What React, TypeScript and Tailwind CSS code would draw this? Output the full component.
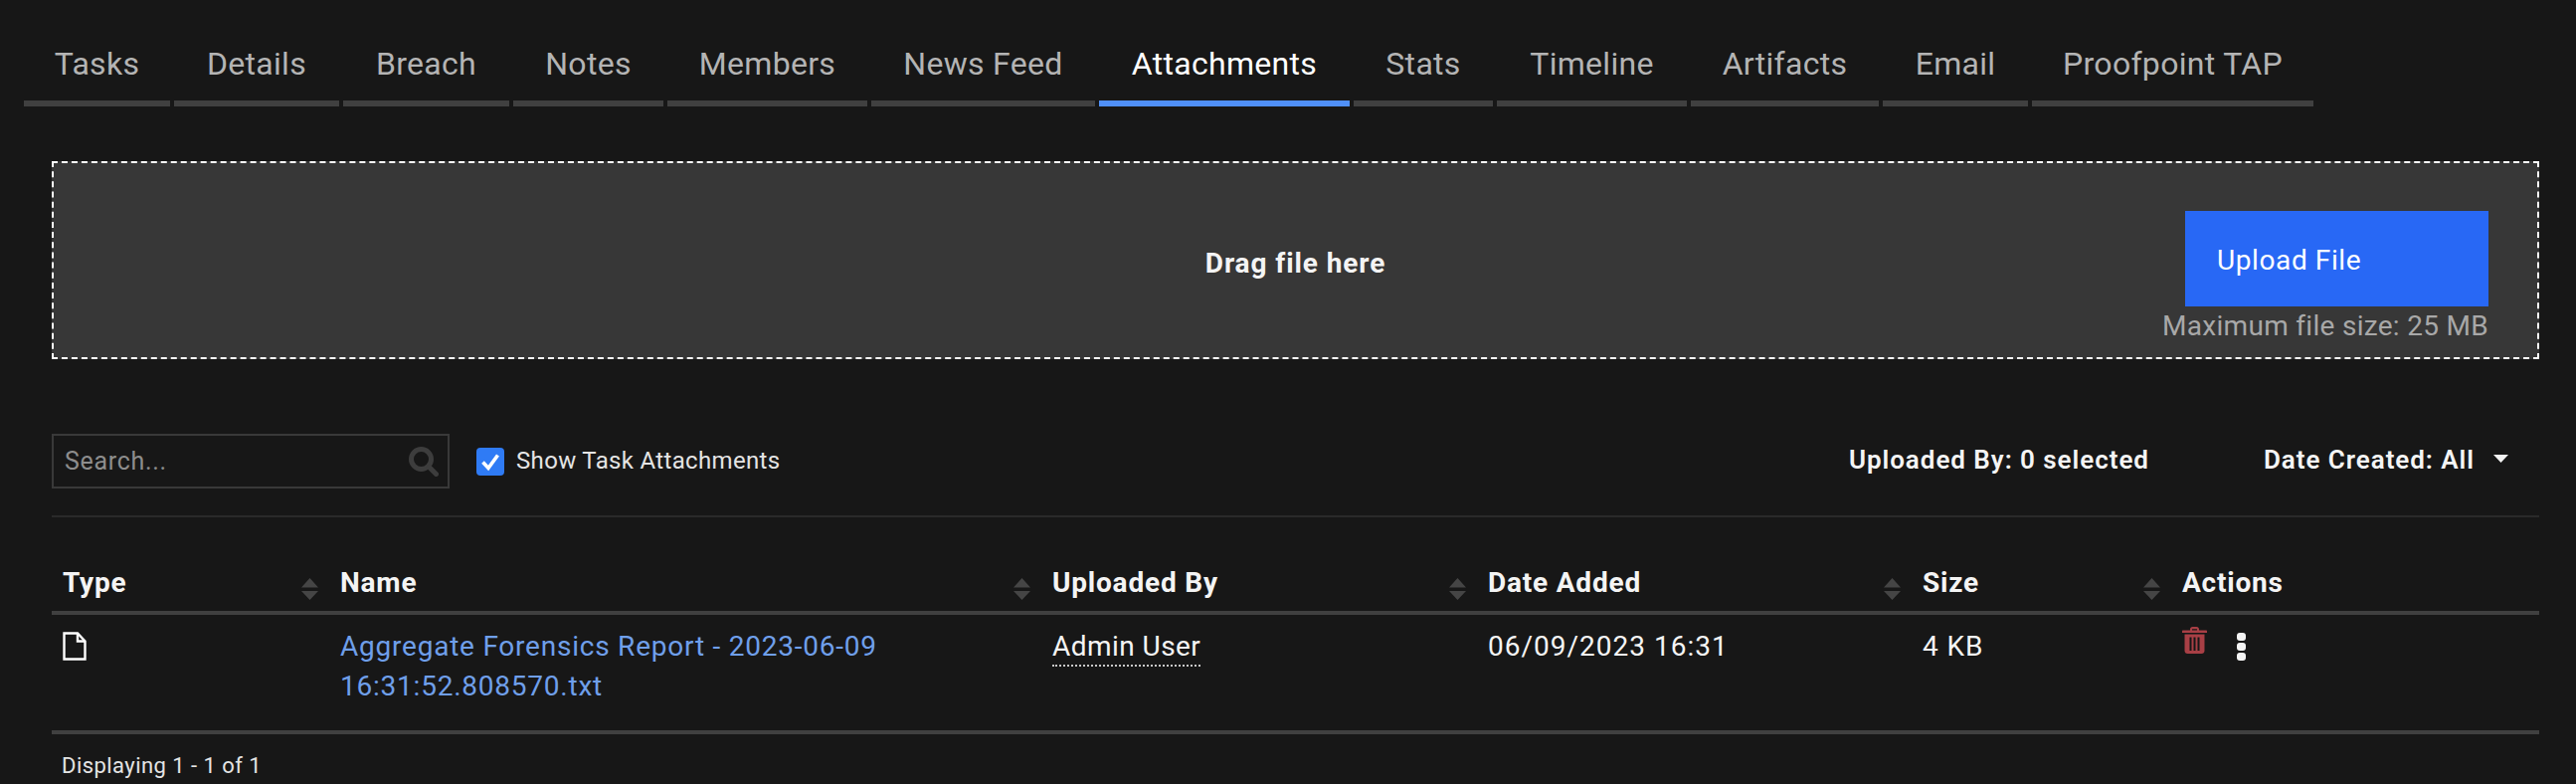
const font = "font-['Roboto','Liberation_Sans',sans-serif]";

const tabs = [
  { label: "Tasks", w: "w-[147px]" },
  { label: "Details", w: "w-[166px]" },
  { label: "Breach", w: "w-[167px]" },
  { label: "Notes", w: "w-[151px]" },
  { label: "Members", w: "w-[201px]" },
  { label: "News Feed", w: "w-[225px]" },
  { label: "Attachments", w: "w-[252px]", active: true },
  { label: "Stats", w: "w-[140px]" },
  { label: "Timeline", w: "w-[191px]" },
  { label: "Artifacts", w: "w-[189px]" },
  { label: "Email", w: "w-[146px]" },
  { label: "Proofpoint TAP", w: "w-[283px]" },
];

function Sort() {
  return (
    <svg width="17" height="22" viewBox="0 0 17 22" className="mt-[17px] shrink-0">
      <path d="M8.5 0L17 9.5H0z M0 13H17L8.5 22z" fill="#454545" />
    </svg>
  );
}

function Head({ label, last }: { label: string; last?: boolean }) {
  return (
    <div className="flex items-start justify-between px-[11px]">
      <span className="pt-[4px] text-[28px] leading-[36px] font-bold tracking-[0.8px] text-[#f4f4f4]">{label}</span>
      {!last && <Sort />}
    </div>
  );
}

function Cell({ children }: { children?: React.ReactNode }) {
  return <div className="px-[11px] pt-[12px] text-[28px] leading-[40px] text-[#f4f4f4]">{children}</div>;
}

export default function App() {
  return (
    <div className={`${font} h-[788px] w-full overflow-hidden bg-[#171717]`}>
      <div className="flex gap-[4px] pl-[24px] pt-[39px]">
        {tabs.map((t) => (
          <div
            key={t.label}
            className={`${t.w} flex h-[68px] items-start justify-center border-b-[6px] pt-[5px] text-[32px] leading-[40px] tracking-[0.3px] ${
              t.active ? "border-[#5090f8] text-white" : "border-[#404040] text-[#b4b4b4]"
            }`}
          >
            {t.label}
          </div>
        ))}
      </div>

      <div className="ml-[52px] mt-[55px] grid h-[199px] w-[2501px] grid-cols-[1fr_auto_1fr] items-start border-2 border-dashed border-white bg-[#373737]">
        <div />
        <div className="pt-[81px] text-[28px] leading-[40px] font-bold tracking-[0.9px] text-[#f4f4f4]">Drag file here</div>
        <div className="flex flex-col items-end pr-[49px] pt-[48px]">
          <div className="flex h-[96px] w-[305px] items-center bg-[#2868f5] pb-[0px] pl-[32px] pt-[3px] text-[28px] tracking-[0.6px] text-white">
            Upload File
          </div>
          <div className="mt-[2px] text-[28px] leading-[36px] tracking-[0.3px] text-[#a8a8a8]">Maximum file size: 25 MB</div>
        </div>
      </div>

      <div className="ml-[52px] mt-[75px] w-[2501px]">
        <div className="flex h-[84px] items-start border-b-2 border-[#2a2a2a]">
          <div className="flex h-[55px] w-[400px] items-center border-2 border-[#393939] pl-[11px] pr-[9px]">
            <span className="flex-1 text-[25px] tracking-[0.7px] text-[#8d8d8d]">Search...</span>
            <svg width="30" height="30" viewBox="0 0 30 30" fill="none" stroke="#3d3d3d">
              <circle cx="12.5" cy="12.5" r="10" strokeWidth="5" />
              <path d="M20.5 20.5L27.5 27.5" strokeWidth="5" strokeLinecap="round" />
            </svg>
          </div>
          <div className="ml-[27px] mt-[14px] flex h-[28px] w-[28px] items-center justify-center rounded-[4px] bg-[#2f7bf5]">
            <svg width="22" height="22" viewBox="0 0 22 22" fill="none">
              <path d="M3.5 11.5L9 17.5L18.5 4.5" stroke="white" strokeWidth="3.6" />
            </svg>
          </div>
          <div className="ml-[12px] mt-[10px] text-[24px] leading-[34px] tracking-[0.33px] text-[#e4e4e4]">Show Task Attachments</div>
          <div className="flex-1" />
          <div className="mt-[8px] text-[26px] font-semibold leading-[36px] tracking-[0.95px] text-[#f4f4f4]">Uploaded By: 0 selected</div>
          <div className="ml-[115px] mt-[8px] text-[26px] font-semibold leading-[36px] tracking-[0.95px] text-[#f4f4f4]">Date Created: All</div>
          <svg width="15" height="8" viewBox="0 0 15 8" className="ml-[19px] mr-[31px] mt-[21px]">
            <path d="M0 0H15L7.5 8z" fill="#f4f4f4" />
          </svg>
        </div>

        <div className="mt-[44px] grid h-[54px] grid-cols-[279px_716px_438px_437px_261px_370px] border-b-4 border-[#404040]">
          <Head label="Type" />
          <Head label="Name" />
          <Head label="Uploaded By" />
          <Head label="Date Added" />
          <Head label="Size" />
          <Head label="Actions" last />
        </div>

        <div className="grid h-[120px] grid-cols-[279px_716px_438px_437px_261px_370px] border-b-4 border-[#404040]">
          <Cell>
            <svg width="24" height="29" viewBox="0 0 24 29" fill="none" className="mt-[5px] block" stroke="white" strokeWidth="2.4">
              <path d="M1.5 1.5H15L22.5 9.5V27.5H1.5z" />
              <path d="M15 1.5V9.5H22.5" />
            </svg>
          </Cell>
          <Cell>
            <span className="block w-[600px] tracking-[0.77px] text-[#6f9fea]">Aggregate Forensics Report - 2023-06-09 16:31:52.808570.txt</span>
          </Cell>
          <Cell>
            <span className="border-b-2 border-dotted border-[#c8c8c8] pb-[2px] tracking-[0.45px]">Admin User</span>
          </Cell>
          <Cell>
            <span className="tracking-[1px]">06/09/2023 16:31</span>
          </Cell>
          <Cell>
            <span className="tracking-[0.9px]">4 KB</span>
          </Cell>
          <div className="flex items-start px-[11px] pt-[12px]">
            <svg width="25" height="27" viewBox="0 0 25 27" fill="#a83f45">
              <path d="M8 3.5V2.5C8 1 9 0 10.5 0H14.5C16 0 17 1 17 2.5V3.5H24C24.6 3.5 25 3.9 25 4.5V6H0V4.5C0 3.9 .4 3.5 1 3.5ZM10 3.5H15V2.2H10Z" />
              <path d="M2.5 7.5H22.5V24C22.5 25.7 21.2 27 19.5 27H5.5C3.8 27 2.5 25.7 2.5 24ZM7.5 10.5V24H9.5V10.5ZM11.5 10.5V24H13.5V10.5ZM15.5 10.5V24H17.5V10.5Z" fillRule="evenodd" />
            </svg>
            <svg width="9" height="28" viewBox="0 0 9 28" fill="#f4f4f4" className="ml-[30px] mt-[6px]">
              <rect width="9" height="8" rx="3" />
              <rect y="10" width="9" height="8" rx="3" />
              <rect y="20" width="9" height="8" rx="3" />
            </svg>
          </div>
        </div>

        <div className="pl-[10px] pt-[17px] text-[22px] leading-[30px] tracking-[0.45px] text-[#e4e4e4]">Displaying 1 - 1 of 1</div>
      </div>
    </div>
  );
}
